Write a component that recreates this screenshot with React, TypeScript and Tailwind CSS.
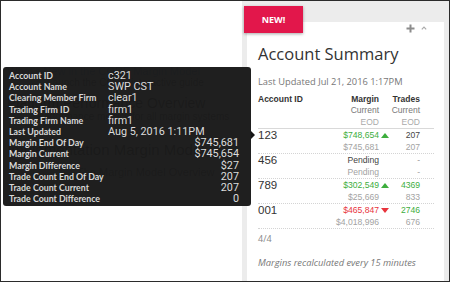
const tip: [string, string, boolean][] = [
  ["Account ID", "c321", false],
  ["Account Name", "SWP CST", false],
  ["Clearing Member Firm", "clear1", false],
  ["Trading Firm ID", "firm1", false],
  ["Trading Firm Name", "firm1", false],
  ["Last Updated", "Aug 5, 2016 1:11PM", false],
  ["Margin End Of Day", "$745,681", true],
  ["Margin Current", "$745,654", true],
  ["Margin Difference", "$27", true],
  ["Trade Count End Of Day", "207", true],
  ["Trade Count Current", "207", true],
  ["Trade Count Difference", "0", true],
];

type Row = {
  id: string;
  cur: string;
  eod: string;
  dir: "up" | "down" | null;
  curColor: string;
  tCur: string;
  tEod: string;
  tColor: string;
};

const rows: Row[] = [
  { id: "123", cur: "$748,654", eod: "$745,681", dir: "up", curColor: "text-[#3dae3d]", tCur: "207", tEod: "207", tColor: "text-[#444]" },
  { id: "456", cur: "Pending", eod: "Pending", dir: null, curColor: "text-[#444]", tCur: "-", tEod: "-", tColor: "text-[#999]" },
  { id: "789", cur: "$302,549", eod: "$25,669", dir: "up", curColor: "text-[#3dae3d]", tCur: "4369", tEod: "833", tColor: "text-[#3dae3d]" },
  { id: "001", cur: "$465,847", eod: "$4,018,996", dir: "down", curColor: "text-[#e8343c]", tCur: "2746", tEod: "676", tColor: "text-[#3dae3d]" },
];

function Arrow({ dir }: { dir: "up" | "down" | null }) {
  if (dir === "up")
    return <div className="ml-[2px] w-0 h-0 border-l-[4px] border-r-[4px] border-b-[5px] border-l-transparent border-r-transparent border-b-[#3dae3d]" />;
  if (dir === "down")
    return <div className="ml-[2px] w-0 h-0 border-l-[4px] border-r-[4px] border-t-[5px] border-l-transparent border-r-transparent border-t-[#e8343c]" />;
  return null;
}

export default function App() {
  return (
    <div className="relative w-[450px] h-[282px] border border-[#2b2b2b] bg-white flex overflow-hidden font-['Liberation_Sans',sans-serif]">
      {/* page behind the tooltip */}
      <div className="w-[241px] pl-[6px] pt-[64px] text-[#999]">
        <div className="text-[11px] leading-[12px] text-[#a9c6e6]">What's New in the CORE Margin Model</div>
        <div className="text-[10px] leading-[12px] ml-[40px]">Launch the CORE interactive guide</div>
        <div className="mt-[6px] text-[14px] leading-[16px] text-[#888]">Platform Performance Overview</div>
        <div className="text-[10px] leading-[12px] ml-[30px]">Performance metrics for all margin systems</div>
        <div className="mt-[18px] text-[15px] leading-[18px] text-[#888]">Implementation Margin Model</div>
        <div className="mt-[6px] text-[11px] leading-[14px] ml-[70px]">The Margin Model Overview</div>
      </div>

      {/* right column */}
      <div className="flex-1 bg-[#ececec] pl-[5px] pr-[5px] pt-[7px] pb-[3px]">
        <div className="h-full bg-white pl-[11px] pr-[10px] font-['Open_Sans',sans-serif]">
          <div className="h-[12px] mt-[14px] flex items-center justify-end gap-[6px] pr-[7px]">
            <svg width="9" height="9" viewBox="0 0 9 9">
              <path d="M4.5 0.5v8M0.5 4.5h8" stroke="#8c8c8c" strokeWidth="2" />
            </svg>
            <svg width="6" height="4" viewBox="0 0 6 4">
              <path d="M0.8 3.4L3 1.2l2.2 2.2" stroke="#aaa" strokeWidth="1.2" fill="none" />
            </svg>
          </div>
          <div className="mt-[10px] text-[16.5px] leading-[20px] text-[#333]">Account Summary</div>
          <div className="mt-[12px] text-[9.3px] leading-[12px] text-[#777]">Last Updated Jul 21, 2016 1:17PM</div>

          <div className="mt-[5px] flex border-b border-[#d9d9d9] font-['Liberation_Sans',sans-serif] text-[8.5px]">
            <div className="flex-1 font-bold text-[#333] leading-[12px]">Account ID</div>
            <div className="w-[60px] text-right">
              <div className="h-[12px] leading-[12px] font-bold text-[#333]">Margin</div>
              <div className="h-[11px] leading-[11px] text-[#777]">Current</div>
              <div className="h-[12px] leading-[12px] text-[#aaa]">EOD</div>
            </div>
            <div className="w-[12px]" />
            <div className="w-[29px] text-right">
              <div className="h-[12px] leading-[12px] font-bold text-[#333]">Trades</div>
              <div className="h-[11px] leading-[11px] text-[#777]">Current</div>
              <div className="h-[12px] leading-[12px] text-[#aaa]">EOD</div>
            </div>
            <div className="w-[14px]" />
          </div>

          {rows.map((r) => (
            <div key={r.id} className="flex border-b border-dotted border-[#d4d4d4] font-['Liberation_Sans',sans-serif] text-[8.6px]">
              <div className="flex-1 text-[11.5px] leading-[12px] text-[#333]">{r.id}</div>
              <div className="w-[60px] text-right">
                <div className={`h-[12px] leading-[12px] ${r.curColor}`}>{r.cur}</div>
                <div className="h-[12px] leading-[12px] text-[#a3a3a3]">{r.eod}</div>
              </div>
              <div className="w-[12px] h-[12px] flex items-center">
                <Arrow dir={r.dir} />
              </div>
              <div className="w-[29px] text-right">
                <div className={`h-[12px] leading-[12px] ${r.tColor}`}>{r.tCur}</div>
                <div className="h-[12px] leading-[12px] text-[#a3a3a3]">{r.tEod}</div>
              </div>
              <div className="w-[14px]" />
            </div>
          ))}

          <div className="mt-[4px] text-[9px] leading-[12px] text-[#888]">4/4</div>
          <div className="mt-[12px] text-[9.3px] leading-[12px] italic text-[#777]">Margins recalculated every 15 minutes</div>
        </div>
      </div>

      {/* NEW badge */}
      <div className="absolute left-[243px] top-[5px] w-[59px] h-[27px] bg-[#e2174b] shadow-[0_1px_3px_rgba(0,0,0,0.35)] flex items-center justify-center text-white text-[9px] font-bold font-['Open_Sans',sans-serif]">
        NEW!
      </div>

      {/* tooltip */}
      <div className="absolute left-[2px] top-[66px] w-[248px] h-[139px] rounded-[3px] bg-[#161616]/[0.96] pt-[3px] pl-[6px] pr-[12px]">
        {tip.map(([label, value, right]) => (
          <div key={label} className="flex h-[11.2px] items-center">
            <div className="w-[99px] text-[8.8px] font-bold text-[#d8d8d8] font-['Lato',sans-serif] leading-[11px] whitespace-nowrap">{label}</div>
            <div className={`flex-1 text-[10.8px] leading-[11px] text-[#dcdcdc] font-['Roboto',sans-serif] ${right ? "text-right" : ""}`}>{value}</div>
          </div>
        ))}
        <div className="absolute right-[-4px] top-[64px] w-0 h-0 border-t-[4px] border-b-[4px] border-l-[4px] border-t-transparent border-b-transparent border-l-[#161616]" />
      </div>
    </div>
  );
}
